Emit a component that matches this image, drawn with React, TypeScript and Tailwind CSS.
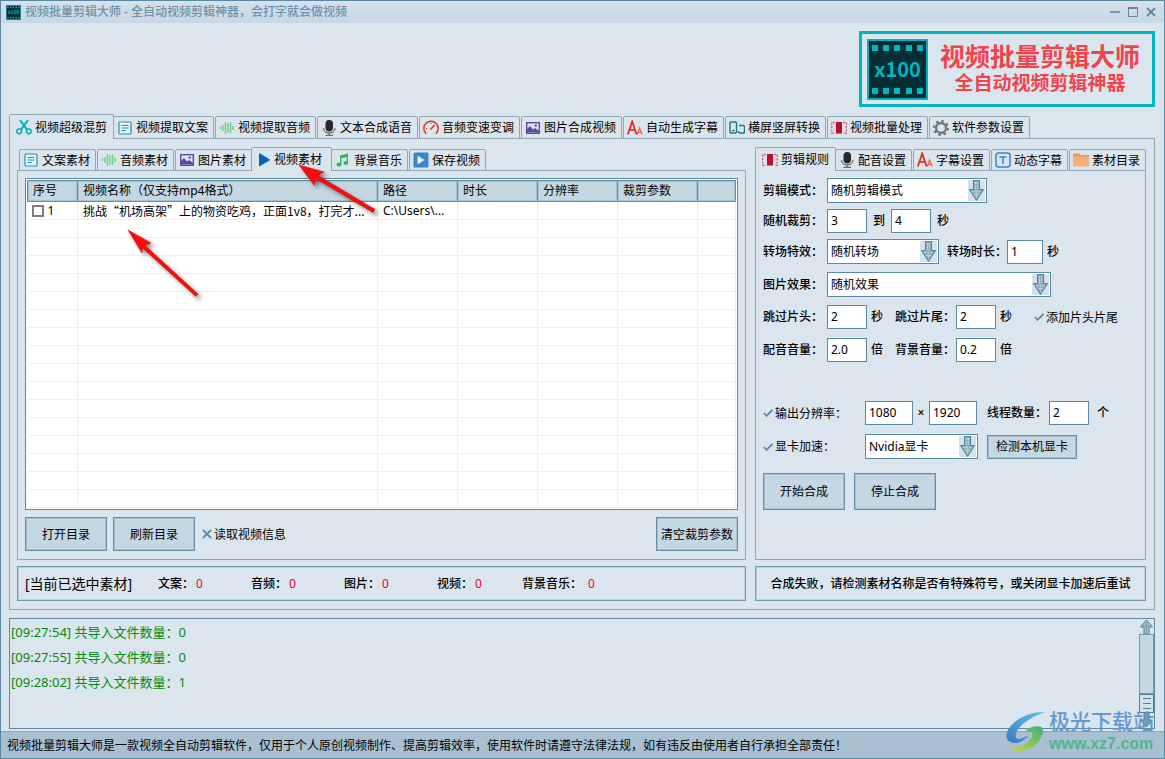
import React, { useState } from 'react';

const ICON = 'block h-4 w-4 shrink-0';

const ScissorsIcon = () => (
  <svg className={ICON} viewBox="0 0 16 16" fill="none" stroke="#04b0bb" strokeWidth="1.5">
    <path d="M4 1l7 9.6M12 1L5 10.6" strokeWidth="2" />
    <circle cx="3.2" cy="12.3" r="2.4" />
    <circle cx="12.8" cy="12.3" r="2.4" />
  </svg>
);

const DocIcon = () => (
  <svg className={ICON} viewBox="0 0 16 16" fill="none" stroke="#2092b4" strokeWidth="1.2">
    <rect x="2" y="2" width="12" height="12" rx="1" fill="#e8f6fa" />
    <path d="M4.5 5.5h7M4.5 8h7M4.5 10.5h4" />
  </svg>
);

const WaveIcon = () => (
  <svg className={ICON} viewBox="0 0 16 16" fill="none" stroke="#6fd08a" strokeWidth="1.5">
    <path d="M1.5 6.5v2.5M4 5v6M6.5 2v12M9 3.5v9M11.5 2.5v10.5M14 6v4" />
  </svg>
);

const MicIcon = () => (
  <svg className={ICON} viewBox="0 0 16 16" fill="none" stroke="#2f3337" strokeWidth="1.2">
    <rect x="4.5" y="0" width="7.5" height="11.5" rx="3.7" fill="#26292c" stroke="none" />
    <path d="M2.5 8c0 6.500 11.500 6.500 11.500 0M8.200 12.700v2.500M4.500 15.300h7.500" stroke="#666" />
  </svg>
);

const GaugeIcon = () => (
  <svg className={ICON} viewBox="0 0 16 16" fill="none" stroke="#e0351f" strokeWidth="1.5">
    <path d="M3.2 13.8a7.2 7.2 0 1 1 9.6 0" />
    <path d="M7.5 9.5l4-4.5" />
    <path d="M3 8.5h1M8 3v1" strokeWidth="1" />
  </svg>
);

const ImageIcon = () => (
  <svg className={ICON} viewBox="0 0 16 16">
    <rect x="1.7" y="2.7" width="12.6" height="10.6" fill="#e4def5" stroke="#5a4b9b" strokeWidth="1.4" />
    <path d="M2 12V9l3-3 3 3.5 2-1.5 4 3v1.5H2z" fill="#5a4b9b" />
    <circle cx="10.8" cy="5.6" r="1.2" fill="#5a4b9b" />
  </svg>
);

const LettersIcon = () => (
  <svg className={ICON} viewBox="0 0 16 16" fill="none" stroke="#e0301a" strokeWidth="1.8">
    <path d="M0.8 14.5L5.2 1.5L9.6 14.5M2.4 9.8h5.6" />
    <path d="M10.2 14.500l2.400-6.500 2.600 6.500M11 12.300h3.200" stroke="#e8604c" strokeWidth="1.2" />
  </svg>
);

const RotateIcon = () => (
  <svg className={ICON} viewBox="0 0 16 16" fill="none" stroke="#1f7a78" strokeWidth="1.4">
    <rect x="1" y="2" width="6.5" height="11" rx="1" />
    <path d="M3 10.5h2.5" />
    <path d="M10 5.5h4.5a1 1 0 0 1 1 1v5.5a1 1 0 0 1-1 1H10M9.5 11v2" />
  </svg>
);

const ClipIcon = () => (
  <svg className={ICON} viewBox="0 0 16 16">
    <path d="M4 2.5H.7v10.8H4M12 2.5h3.300v10.800H12" fill="none" stroke="#d8677a" strokeWidth="1.4" strokeDasharray="2.2 1.2" />
    <rect x="5" y="2" width="6" height="11.5" fill="#bb0f2c" />
  </svg>
);

const GearIcon = () => (
  <svg className={ICON} viewBox="0 0 16 16" fill="none" stroke="#707376">
    <circle cx="8" cy="8" r="4.900" strokeWidth="2.200" />
    <circle cx="8" cy="8" r="6.900" strokeWidth="2.200" strokeDasharray="2.710 2.710" />
  </svg>
);

const PlayIcon = () => (
  <svg className="block h-4 w-[13px] shrink-0" viewBox="0 0 13 16">
    <path d="M1 2Q1 1 2 1.5L11.5 7.2Q12.2 7.800 11.500 8.400L2 14Q1 14.500 1 13.500z" fill="#0a63b5" />
  </svg>
);

const MusicIcon = () => (
  <svg className={ICON} viewBox="0 0 16 16" fill="#2fb457">
    <path d="M5 3.5L13 1.5v9.3h-1.3V5L6.3 6.300v6.200H5z" />
    <ellipse cx="4" cy="12.5" rx="2.4" ry="1.9" />
    <ellipse cx="10.8" cy="11" rx="2.4" ry="1.9" />
  </svg>
);

const SaveVideoIcon = () => (
  <svg className={ICON} viewBox="0 0 16 16">
    <rect x="0.5" y="0.5" width="15" height="15" rx="1.5" fill="#3c86c8" />
    <path d="M4.5 3.5v9l7-4.5z" fill="#e6f0f8" />
  </svg>
);

const TextBoxIcon = () => (
  <svg className={ICON} viewBox="0 0 16 16" fill="none" stroke="#3c84cf" strokeWidth="1.5">
    <rect x="1" y="1" width="14" height="14" rx="2.5" />
    <path d="M4.5 5h7M8 5v7" />
  </svg>
);

const FolderIcon = () => (
  <svg className={ICON} viewBox="0 0 16 16">
    <path d="M0 1.5h6l1.5 1.5H16v2H0z" fill="#e89c50" />
    <rect x="0" y="4.5" width="16" height="10" fill="#f2b176" />
  </svg>
);

const ArrowDown = () => (
  <svg className="block h-[21px] w-[17px]" viewBox="0 0 17 21">
    <path d="M5.500 0.500h6v9h4L8.500 20.500 1.500 9.500h4z" fill="#8fafbf" stroke="#4f8095" />
    <path d="M7.500 2v7M9.500 2v7M4 11.500h9M8.500 11v7M6 14.500h5" stroke="#c3d5e0" fill="none" strokeDasharray="2 1" />
  </svg>
);

type Tab = { label: string; icon: React.FC };

const mainTabs: Tab[] = [
  { label: '视频超级混剪', icon: ScissorsIcon },
  { label: '视频提取文案', icon: DocIcon },
  { label: '视频提取音频', icon: WaveIcon },
  { label: '文本合成语音', icon: MicIcon },
  { label: '音频变速变调', icon: GaugeIcon },
  { label: '图片合成视频', icon: ImageIcon },
  { label: '自动生成字幕', icon: LettersIcon },
  { label: '横屏竖屏转换', icon: RotateIcon },
  { label: '视频批量处理', icon: ClipIcon },
  { label: '软件参数设置', icon: GearIcon },
];

const materialTabs: Tab[] = [
  { label: '文案素材', icon: DocIcon },
  { label: '音频素材', icon: WaveIcon },
  { label: '图片素材', icon: ImageIcon },
  { label: '视频素材', icon: PlayIcon },
  { label: '背景音乐', icon: MusicIcon },
  { label: '保存视频', icon: SaveVideoIcon },
];

const settingTabs: Tab[] = [
  { label: '剪辑规则', icon: ClipIcon },
  { label: '配音设置', icon: MicIcon },
  { label: '字幕设置', icon: LettersIcon },
  { label: '动态字幕', icon: TextBoxIcon },
  { label: '素材目录', icon: FolderIcon },
];

const TabBar = ({ tabs, initial, large }: { tabs: Tab[]; initial: number; large?: boolean }) => {
  const [active, setActive] = useState(initial);
  return (
    <div role="tablist" className="relative z-10 -mb-px flex items-end gap-px pl-0.5">
      {tabs.map(({ label, icon: Icon }, i) => {
        const size = large
          ? i === active ? 'h-[25px] w-[105px]' : 'h-[23px] w-[101px]'
          : i === active ? 'h-6 w-[81px]' : 'h-[22px] w-[77px]';
        const look = i === active
          ? 'z-10 -mx-0.5 border-b-0 pl-1.5'
          : 'pl-[3px]';
        return (
          <button
            key={label}
            role="tab"
            aria-selected={i === active}
            onClick={() => setActive(i)}
            className={`relative flex shrink-0 items-center gap-[3px] whitespace-nowrap rounded-t-xs border border-[#8fa6b3] bg-[#dbe5ed] ${size} ${look}`}
          >
            <Icon />
            <span className="pt-px">{label}</span>
          </button>
        );
      })}
    </div>
  );
};

const Button = ({ children, className }: { children: React.ReactNode; className: string }) => (
  <button className={`border border-[#648da4] bg-[#c6d7e4] pt-px shadow-[inset_0_0_0_1px_#a6c1d0] ${className}`}>
    {children}
  </button>
);

const Select = ({ label, value, className }: { label: string; value: string; className: string }) => (
  <div className={`relative ${className}`}>
    <select aria-label={label} className="block h-[25px] w-full appearance-none border border-[#5b8aa3] bg-white px-[3px] outline-none">
      <option>{value}</option>
    </select>
    <span className="pointer-events-none absolute right-0.5 top-0.5 bg-[#d5e2eb]">
      <ArrowDown />
    </span>
  </div>
);

const Field = ({ label, value, className }: { label: string; value: string; className: string }) => (
  <input
    aria-label={label}
    defaultValue={value}
    className={`block h-6 border border-[#5b8aa3] bg-white px-[3px] pb-px outline-none ${className}`}
  />
);

const Check = ({ label, on, className }: { label: string; on?: boolean; className?: string }) => (
  <label className={`flex items-center gap-0.5 ${className ?? ''}`}>
    <span className="relative block h-2.5 w-2.5">
      <input type="checkbox" defaultChecked={on} className="block h-2.5 w-2.5 appearance-none" />
      <svg className="pointer-events-none absolute inset-0" viewBox="0 0 10 10" fill="none" stroke="#5b8aa3" strokeWidth="1.8">
        {on ? <path d="M1 5l2.5 3L9.5 2" /> : <path d="M1 1l8 8M9 1L1 9" />}
      </svg>
    </span>
    <span className="pt-px">{label}</span>
  </label>
);

const columns = [
  { title: '序号', width: 'w-[50px]' },
  { title: '视频名称（仅支持mp4格式）', width: 'w-[300px]' },
  { title: '路径', width: 'w-20' },
  { title: '时长', width: 'w-20' },
  { title: '分辨率', width: 'w-20' },
  { title: '裁剪参数', width: 'w-20' },
  { title: '', width: '' },
];

const stats = [
  { name: '文案：', count: 0 },
  { name: '音频：', count: 0 },
  { name: '图片：', count: 0 },
  { name: '视频：', count: 0 },
  { name: '背景音乐：', count: 0 },
];

const logs = [
  '[09:27:54] 共导入文件数量：0',
  '[09:27:55] 共导入文件数量：0',
  '[09:28:02] 共导入文件数量：1',
];

const VideoTable = () => (
  <div className="h-[332px] overflow-hidden border border-[#5b8aa3] bg-white p-px">
    <table className="w-full table-fixed border-collapse">
      <thead>
        <tr className="h-[21px]">
          {columns.map((col, i) => (
            <th
              key={i}
              className={`border border-[#6690a6] bg-[#c6d7e4] py-0 pl-[5px] text-left font-normal shadow-[inset_0_0_0_1px_#a6c1d0] ${col.width}`}
            >
              {col.title}
            </th>
          ))}
        </tr>
      </thead>
      <tbody>
        <tr className="h-[18px]">
          <td className="border-b border-r border-[#eeeeee] p-0">
            <label className="flex items-center gap-1 pl-1">
              <input type="checkbox" className="h-3 w-3 appearance-none border-2 border-[#7d7d7d] bg-white" />1
            </label>
          </td>
          <td className="truncate border-b border-r border-[#eeeeee] py-0 pl-[5px] pr-2 font-['Noto_Sans_CJK_SC',sans-serif] leading-[17px]">
            挑战“机场高架”上的物资吃鸡，正面1v8，打完才...
          </td>
          <td className="border-b border-r border-[#eeeeee] py-0 pl-[5px] leading-[17px]">C:\Users\...</td>
          {[0, 1, 2, 3].map((n) => (
            <td key={n} className="border-b border-r border-[#eeeeee]" />
          ))}
        </tr>
        {Array.from({ length: 16 }, (_, r) => (
          <tr key={r} className="h-[18px]">
            {columns.map((_, c) => (
              <td key={c} className="border-b border-r border-[#eeeeee] p-0" />
            ))}
          </tr>
        ))}
      </tbody>
    </table>
  </div>
);

const RulesForm = () => (
  <form className="flex flex-1 flex-col border border-[#8fa6b3] p-[7px]">
    <div className="flex items-center">
      <span className="w-16 font-medium">剪辑模式：</span>
      <Select label="剪辑模式" value="随机剪辑模式" className="w-40" />
    </div>
    <div className="mt-1.5 flex items-center">
      <span className="w-16 font-medium">随机裁剪：</span>
      <Field label="最短秒数" value="3" className="w-10" />
      <span className="mx-1.5 font-medium">到</span>
      <Field label="最长秒数" value="4" className="w-10" />
      <span className="ml-1.5 font-medium">秒</span>
    </div>
    <div className="mt-1.5 flex items-center">
      <span className="w-16 font-medium">转场特效：</span>
      <Select label="转场特效" value="随机转场" className="w-28" />
      <span className="ml-2 w-[60px] font-medium">转场时长：</span>
      <Field label="转场时长" value="1" className="w-9" />
      <span className="ml-1 font-medium">秒</span>
    </div>
    <div className="mt-2 flex items-center">
      <span className="w-16 font-medium">图片效果：</span>
      <Select label="图片效果" value="随机效果" className="w-56" />
    </div>
    <div className="mt-2 flex items-center">
      <span className="w-16 font-medium">跳过片头：</span>
      <Field label="跳过片头" value="2" className="w-10" />
      <span className="ml-1 w-6 font-medium">秒</span>
      <span className="w-[61px] font-medium">跳过片尾：</span>
      <Field label="跳过片尾" value="2" className="w-10" />
      <span className="ml-1 font-medium">秒</span>
      <Check label="添加片头片尾" on className="ml-[22px]" />
    </div>
    <div className="mt-[9px] flex items-center">
      <span className="w-16 font-medium">配音音量：</span>
      <Field label="配音音量" value="2.0" className="w-10" />
      <span className="ml-1 w-6 font-medium">倍</span>
      <span className="w-[61px] font-medium">背景音量：</span>
      <Field label="背景音量" value="0.2" className="w-10" />
      <span className="ml-1 font-medium">倍</span>
    </div>
    <div className="mt-[39px] flex items-center">
      <Check label="输出分辨率：" on className="w-[102px]" />
      <Field label="宽度" value="1080" className="w-12" />
      <span className="w-4 text-center font-medium">×</span>
      <Field label="高度" value="1920" className="w-12" />
      <span className="ml-2.5 w-[62px] font-medium">线程数量：</span>
      <Field label="线程数量" value="2" className="w-10" />
      <span className="ml-2 font-medium">个</span>
    </div>
    <div className="mt-[9px] flex items-center">
      <Check label="显卡加速：" on className="w-[102px]" />
      <Select label="显卡" value="Nvidia显卡" className="w-[113px]" />
      <Button className="ml-[9px] h-6 w-[90px]">检测本机显卡</Button>
    </div>
    <div className="mt-3.5 flex gap-[9px]">
      <Button className="h-[37px] w-[82px]">开始合成</Button>
      <Button className="h-[37px] w-[82px]">停止合成</Button>
    </div>
  </form>
);

const FilmLogo = ({ className }: { className: string }) => (
  <svg className={className} viewBox="0 0 61 61">
    <rect x="1" y="1" width="59" height="59" fill="#042e33" stroke="#04b0bb" strokeWidth="2" />
    {[5, 16, 27, 39, 50].map((x) => (
      <g key={x} fill="#04b4c0">
        <rect x={x} y="6" width="6" height="6" />
        <rect x={x} y="49" width="6" height="6" />
      </g>
    ))}
    <text x="30.5" y="38" textAnchor="middle" fontSize="20" fontWeight="700" fontFamily="'Noto Sans CJK SC', sans-serif" fill="#04b4c0">x100</text>
  </svg>
);

const RedArrow = ({ className, flat }: { className: string; flat?: boolean }) => (
  <svg className={`pointer-events-none absolute z-20 drop-shadow-[3px_3px_2px_rgba(0,0,0,0.45)] ${className}`} viewBox={flat ? '0 0 80 52' : '0 0 74 72'}>
    {flat ? (
      <path d="M1 2L26 9l-6 3.5L77 46.5l-2 3L17.5 15.5l-1 7z" fill="#f80d0d" stroke="#d80000" strokeWidth="0.5" />
    ) : (
      <path d="M1 1l23 13-6 2.500L71 65l-2 2.500L15.500 19l-.5 5z" fill="#f80d0d" stroke="#d80000" strokeWidth="0.5" />
    )}
  </svg>
);

const Watermark = () => (
  <div className="pointer-events-none absolute bottom-1 right-2.5 z-20 flex items-center gap-0.5 font-['Liberation_Sans','Noto_Sans_CJK_SC',sans-serif]">
    <svg className="h-11 w-[42px]" viewBox="0 0 46 44" preserveAspectRatio="none">
      <defs>
        <linearGradient id="wave" x1="0" y1="1" x2="1" y2="0">
          <stop offset="0" stopColor="#3b78bd" />
          <stop offset="1" stopColor="#65c1ef" />
        </linearGradient>
        <linearGradient id="leaf" x1="0" y1="1" x2="1" y2="0">
          <stop offset="0" stopColor="#c8d642" />
          <stop offset="1" stopColor="#3fae7c" />
        </linearGradient>
      </defs>
      <path d="M44 2C24 1 6 12 2 23c-2 8 5 12 15 9 5-2 6-5 9-5-4-3-7 3-12 2C8 27 13 12 44 2z" fill="url(#wave)" />
      <path d="M40 17c-8-2-15 1-18 5 6-2 11 1 6 7C23 35 15 38 5 38c10 7 27 1 33-8 4-6 5-10 2-13z" fill="url(#leaf)" />
    </svg>
    <div className="whitespace-nowrap">
      <div className="text-[21px] font-medium leading-6 text-[#6499cf]">极光下载站</div>
      <div className="text-base font-bold leading-5 text-[#51b48a]">www.xz7.com</div>
    </div>
  </div>
);

export default function App() {
  return (
    <div
      lang="zh-CN"
      className="relative flex min-h-screen min-w-[1100px] flex-col border border-[#5b88a3] bg-[#dbe5ed] font-['Noto_Sans','Noto_Sans_CJK_SC',sans-serif] text-xs text-black"
    >
      <header className="flex h-[22px] items-center bg-linear-to-b from-[#d6e1eb] to-[#c7d7e4] pl-[5px] pr-2 text-[#6c90a9]">
        <FilmLogo className="mr-1 h-[15px] w-[15px]" />
        <h1 className="font-medium">视频批量剪辑大师 - 全自动视频剪辑神器，会打字就会做视频</h1>
        <div className="ml-auto flex gap-2 text-[#5b88a3]">
          <button aria-label="最小化">
            <svg className="h-2.5 w-2.5" viewBox="0 0 10 10" fill="none" stroke="currentColor" strokeWidth="1.6"><path d="M0 5h10" /></svg>
          </button>
          <button aria-label="最大化">
            <svg className="h-2.5 w-2.5" viewBox="0 0 10 10" fill="none" stroke="currentColor"><path d="M.5 .5h9v9h-9zM.5 1.500h9" /></svg>
          </button>
          <button aria-label="关闭">
            <svg className="h-2.5 w-2.5" viewBox="0 0 10 10" fill="none" stroke="currentColor" strokeWidth="1.8"><path d="M1 1l8 8M9 1L1 9" /></svg>
          </button>
        </div>
      </header>

      <main className="flex flex-1 flex-col pl-2 pr-[9px]">
        <div className="mb-[7px] mt-2 flex h-[76px] w-[296px] items-center self-end border-[3px] border-[#04b4bf] pl-[5px]">
          <FilmLogo className="h-[61px] w-[61px] shrink-0" />
          <div className="flex-1 whitespace-nowrap text-center font-['Liberation_Sans','Noto_Sans_CJK_SC',sans-serif] font-bold text-[#f2434d]">
            <p className="text-[25px] leading-[29px]">视频批量剪辑大师</p>
            <p className="text-[19px] leading-6">全自动视频剪辑神器</p>
          </div>
        </div>

        <TabBar tabs={mainTabs} initial={0} large />
        <section className="flex gap-[9px] border border-[#8fa6b3] py-2 pl-[7px] pr-2">
          <div className="flex min-w-0 flex-1 flex-col">
            <TabBar tabs={materialTabs} initial={3} />
            <div className="border border-[#8fa6b3] px-[7px] pb-2 pt-[7px]">
              <VideoTable />
              <div className="mt-[7px] flex items-center">
                <Button className="h-[34px] w-[82px]">打开目录</Button>
                <Button className="ml-1.5 h-[34px] w-[82px]">刷新目录</Button>
                <Check label="读取视频信息" className="ml-[7px]" />
                <Button className="ml-auto h-[34px] w-[82px]">清空裁剪参数</Button>
              </div>
            </div>
            <div className="mt-1.5 flex h-[35px] items-center border border-[#7099ae] pl-[7px] shadow-[inset_0_0_0_1px_#bccfdb]">
              <span className="w-[133px] text-sm">[当前已选中素材]</span>
              {stats.map((s, i) => (
                <span key={s.name} className={`font-medium ${i === 3 ? 'w-[85px]' : 'w-[93px]'}`}>
                  {s.name}
                  <span className={`font-normal text-[#f00010] ${i === 4 ? 'ml-1.5' : 'ml-0.5'}`}>{s.count}</span>
                </span>
              ))}
            </div>
          </div>

          <div className="flex w-[391px] flex-col">
            <TabBar tabs={settingTabs} initial={0} />
            <RulesForm />
            <div className="mt-1.5 flex h-[35px] items-center justify-center border border-[#7099ae] font-medium shadow-[inset_0_0_0_1px_#bccfdb]">
              合成失败，请检测素材名称是否有特殊符号，或关闭显卡加速后重试
            </div>
          </div>
        </section>

        <section role="log" className="mb-0.5 mt-2 flex min-h-[110px] flex-1 border border-[#5b8aa3]">
          <ul className="flex-1 pl-px pt-px text-[13px] leading-[25px] text-[#078a0c]">
            {logs.map((line) => <li key={line}>{line}</li>)}
          </ul>
          <div className="flex w-[15px] flex-col">
            <svg className="h-[15px] w-full shrink-0" viewBox="0 0 15 15">
              <path d="M7.5 1l6 7H10v7H5V8H1.5z" fill="#a9c1cf" stroke="#527f93" />
              <path d="M4 7h7M7.5 3v11" stroke="#7199aa" />
            </svg>
            <div className="flex-1 border border-[#7099ae] bg-[#c6d7e4]" />
            <div className="flex h-[19px] flex-col items-center justify-center gap-1 border border-[#527f93] bg-[#d5e2eb]">
              <span className="h-px w-2 bg-[#527f93]" />
              <span className="h-px w-2 bg-[#527f93]" />
              <span className="h-px w-2 bg-[#527f93]" />
            </div>
            <svg className="h-[15px] w-full shrink-0" viewBox="0 0 15 15">
              <path d="M7.5 14l6-7H10V0H5v7H1.5z" fill="#7c9fb0" stroke="#527f93" />
            </svg>
          </div>
        </section>
      </main>

      <footer className="flex h-[27px] items-center border-t border-[#86a8bc] bg-[#a9c0d3] pl-1.5 pt-0.5">
        视频批量剪辑大师是一款视频全自动剪辑软件，仅用于个人原创视频制作、提高剪辑效率，使用软件时请遵守法律法规，如有违反由使用者自行承担全部责任！
      </footer>

      <RedArrow flat className="left-[297px] top-[162px] h-[52px] w-20" />
      <RedArrow className="left-[126px] top-[228px] h-[72px] w-[74px]" />
      <Watermark />
    </div>
  );
}
